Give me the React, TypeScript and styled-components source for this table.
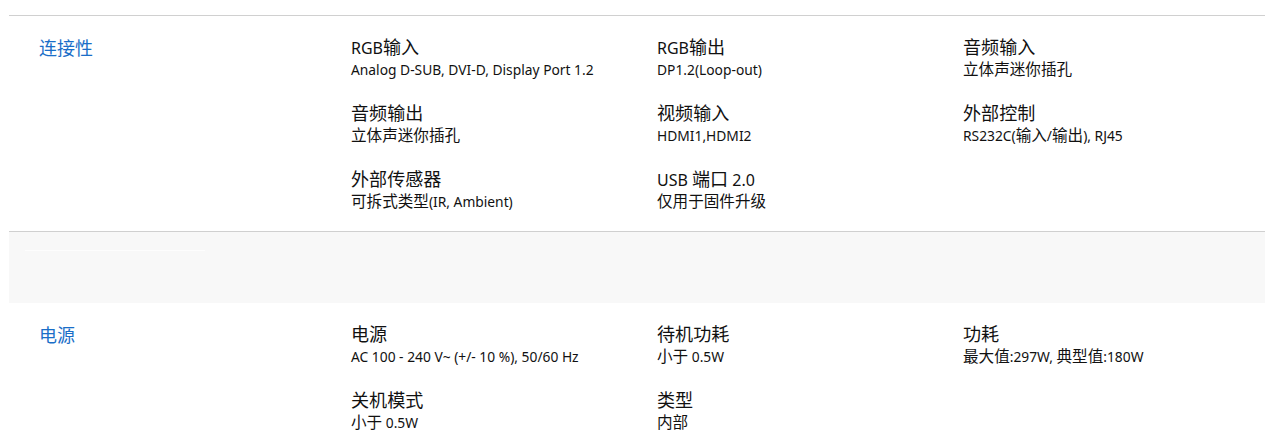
import styled, { createGlobalStyle } from 'styled-components'

const GlobalStyle = createGlobalStyle`
  body {
    margin: 0;
    background: #fff;
    font-family: "Noto Sans", "Noto Sans CJK SC", sans-serif;
    color: #111;
  }
`

type Spec = { title: string; value: string }

const connectivity: Spec[] = [
  { title: 'RGB输入', value: 'Analog D-SUB, DVI-D, Display Port 1.2' },
  { title: 'RGB输出', value: 'DP1.2(Loop-out)' },
  { title: '音频输入', value: '立体声迷你插孔' },
  { title: '音频输出', value: '立体声迷你插孔' },
  { title: '视频输入', value: 'HDMI1,HDMI2' },
  { title: '外部控制', value: 'RS232C(输入/输出), RJ45' },
  { title: '外部传感器', value: '可拆式类型(IR, Ambient)' },
  { title: 'USB 端口 2.0', value: '仅用于固件升级' },
]

const power: Spec[] = [
  { title: '电源', value: 'AC 100 - 240 V~ (+/- 10 %), 50/60 Hz' },
  { title: '待机功耗', value: '小于 0.5W' },
  { title: '功耗', value: '最大值:297W, 典型值:180W' },
  { title: '关机模式', value: '小于 0.5W' },
  { title: '类型', value: '内部' },
]

// Chinese glyphs render a bit larger than the latin ones in the original
const mixed = (text: string) =>
  text.split(/([\u3400-\u9fff]+)/).map((part, i) =>
    /[\u3400-\u9fff]/.test(part) ? <Han key={i}>{part}</Han> : part
  )

const SpecList = ({ items }: { items: Spec[] }) => (
  <Grid>
    {items.map((s) => (
      <Item key={s.title}>
        <Title>{mixed(s.title)}</Title>
        <Value>{mixed(s.value)}</Value>
      </Item>
    ))}
  </Grid>
)

function App() {
  return (
    <Wrapper>
      <GlobalStyle />
      <Section>
        <Label>连接性</Label>
        <SpecList items={connectivity} />
      </Section>
      <Band>
        <BandLine />
      </Band>
      <Section $noBorder>
        <Label>电源</Label>
        <SpecList items={power} />
      </Section>
    </Wrapper>
  )
}

const Wrapper = styled.main`
  padding: 15px 0 0 9px;
`
const Section = styled.section<{ $noBorder?: boolean }>`
  display: flex;
  border-top: ${(p) => (p.$noBorder ? 'none' : '1px solid #d0d0d0')};
  padding: 20px 0 19px 30px;
`
const Label = styled.h3`
  flex: 0 0 312px;
  margin: 0;
  font-size: 18px;
  font-weight: 400;
  line-height: 24px;
  color: #1a6ec8;
`
const Grid = styled.div`
  flex: 1;
  display: grid;
  grid-template-columns: repeat(3, 306px);
  row-gap: 22px;
`
const Item = styled.div`
  display: flex;
  flex-direction: column;
`
const Han = styled.span`
  font-size: 1.13em;
  line-height: 1;
`
const Title = styled.div`
  height: 24px;
  font-size: 16px;
  line-height: 24px;
  white-space: nowrap;
  color: #111;
`
const Value = styled.div`
  height: 20px;
  font-size: 13.8px;
  line-height: 20px;
  white-space: nowrap;
  color: #111;
`
const Band = styled.div`
  height: 72px;
  background: #f8f8f8;
  border-top: 1px solid #d0d0d0;
  padding: 18px 0 0 16px;
  box-sizing: border-box;
`
const BandLine = styled.div`
  width: 180px;
  height: 1px;
  background: #fdfdfd;
`

export default App
